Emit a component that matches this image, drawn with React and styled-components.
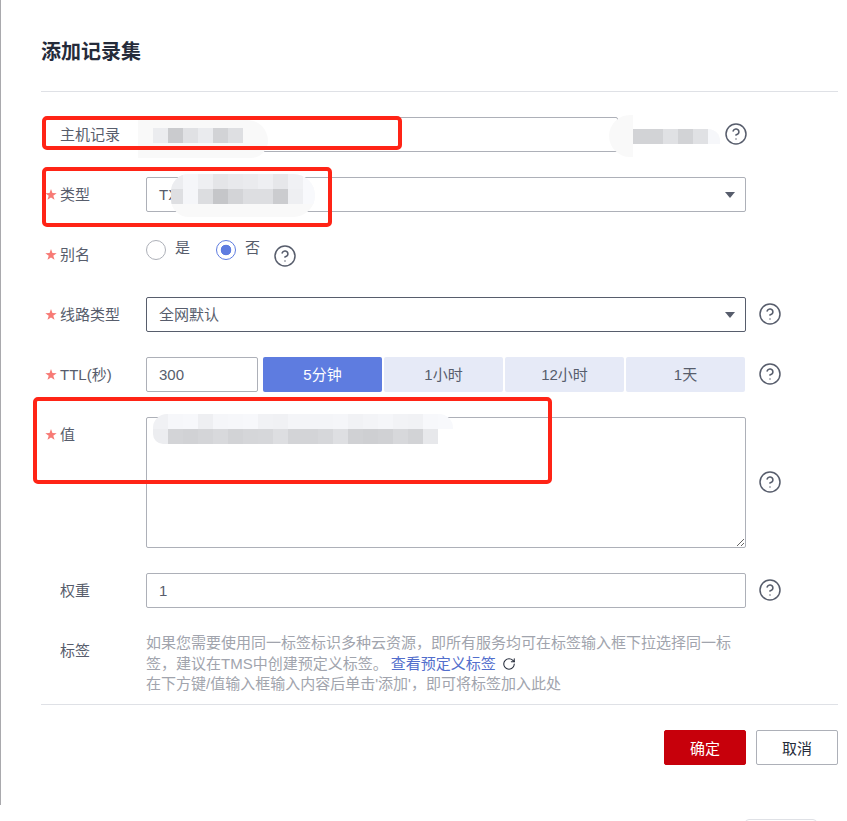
import React from 'react';
import styled, { createGlobalStyle } from 'styled-components';
import { CircleHelp, RotateCw } from 'lucide-react';

const GlobalStyle = createGlobalStyle`
  html, body {
    margin: 0;
    background: #fff;
    overflow: hidden;
  }
  body {
    font-family: 'Liberation Sans', 'Noto Sans CJK SC', sans-serif;
    font-size: 15px;
    color: #575d6c;
  }
`;

const Page = styled.div`
  position: relative;
  width: 847px;
  height: 821px;
  overflow: hidden;
`;

const Dialog = styled.div`
  box-sizing: border-box;
  width: 847px;
  height: 805px;
  padding: 0 9px 0 40px;
  border-left: 1px solid #a9a9ad;
`;

const Title = styled.h2`
  margin: 0;
  height: 92px;
  box-sizing: border-box;
  padding-top: 38px;
  font-size: 20px;
  line-height: 28px;
  font-weight: 700;
  color: #252b3a;
  border-bottom: 1px solid #dfe1e6;
`;

const Form = styled.div`
  display: flex;
  flex-direction: column;
  gap: 25px;
  padding-top: 25px;
`;

const Row = styled.div`
  display: flex;
  align-items: flex-start;
  min-height: 35px;
`;

const Label = styled.div`
  position: relative;
  flex: none;
  width: 105px;
  padding-left: 19px;
  box-sizing: border-box;
  line-height: 35px;
`;

const StarIcon = styled.svg`
  position: absolute;
  left: 4px;
  top: 12px;
  width: 12px;
  height: 12px;
  fill: #f77a75;
`;

const Box = styled.div`
  display: flex;
  align-items: center;
  justify-content: space-between;
  flex: none;
  box-sizing: border-box;
  width: ${(p) => p.$w || 600}px;
  height: 35px;
  padding: 0 12px;
  border: 1px solid ${(p) => (p.$active ? '#575d6c' : '#adb0b8')};
  border-radius: 2px;
  color: #575d6c;
  background: #fff;
`;

const SelectText = styled.span`
  margin-top: -3px;
`;

const Arrow = styled.i`
  width: 0;
  height: 0;
  margin-right: -2px;
  border-left: 5.5px solid transparent;
  border-right: 5.5px solid transparent;
  border-top: 6px solid #575d6c;
`;

const Help = styled(CircleHelp).attrs({ size: 24, strokeWidth: 1.5 })`
  flex: none;
  margin: ${(p) => p.$m || '5px 0 0 12px'};
  color: #575d6c;
`;

const Radios = styled.div`
  display: flex;
  flex: none;
  align-items: flex-start;
  padding-top: 3px;
  width: 130px;
`;

const RadioItem = styled.div`
  display: flex;
  flex: none;
  align-items: flex-start;
  width: 70px;
  line-height: 16px;
  color: #575d6c;
`;

const RadioDot = styled.span`
  flex: none;
  box-sizing: border-box;
  width: 20px;
  height: 20px;
  margin-right: 9px;
  border-radius: 50%;
  border: 1px solid ${(p) => (p.$on ? '#5e7ce0' : '#adb0b8')};
  background: ${(p) => (p.$on ? 'radial-gradient(circle, #5e7ce0 0 5px, #fff 5.6px)' : '#fff')};
`;

const Segments = styled.div`
  display: flex;
  flex: none;
  width: 482px;
  margin-left: 5px;
  gap: 2px;
`;

const Segment = styled.div`
  flex: 1;
  height: 35px;
  line-height: 35px;
  text-align: center;
  border-radius: 2px;
  background: ${(p) => (p.$on ? '#5e7ce0' : '#e6eaf7')};
  color: ${(p) => (p.$on ? '#fff' : '#575d6c')};
`;

const TextArea = styled.textarea`
  display: block;
  flex: none;
  box-sizing: border-box;
  width: 600px;
  height: 131px;
  margin: 0;
  border: 1px solid #adb0b8;
  border-radius: 2px;
  resize: both;
  outline: none;
  background: #fff;
`;

const Hint = styled.div`
  flex: none;
  width: 590px;
  line-height: 20.5px;
  color: #a1a4ad;
`;

const HintLink = styled.a`
  margin-left: 3px;
  color: #526ecc;
`;

const Refresh = styled(RotateCw).attrs({ size: 14, strokeWidth: 1.8 })`
  margin-left: 6px;
  vertical-align: -2px;
  color: #252b3a;
`;

const Footer = styled.div`
  display: flex;
  justify-content: flex-end;
  gap: 10px;
  margin-top: 9.5px;
  padding-top: 25px;
  border-top: 1px solid #dfe1e6;
`;

const Button = styled.button`
  width: 82px;
  height: 35px;
  padding: 0;
  font: inherit;
  border-radius: 2px;
  border: 1px solid ${(p) => (p.$primary ? '#c7000b' : '#adb0b8')};
  background: ${(p) => (p.$primary ? '#c7000b' : '#fff')};
  color: ${(p) => (p.$primary ? '#fff' : '#252b3a')};
`;

const PeekButton = styled.div`
  position: absolute;
  left: 745px;
  top: 819px;
  width: 72px;
  height: 20px;
  box-sizing: border-box;
  border: 1px solid #dfe1e6;
  border-radius: 4px;
`;

/* hand-drawn redaction over the screenshot */
const Patch = styled.div`
  position: absolute;
  left: ${(p) => p.$x}px;
  top: ${(p) => p.$y}px;
  width: ${(p) => p.$w}px;
  height: ${(p) => p.$h}px;
  box-sizing: border-box;
  padding: ${(p) => p.$pad || 0};
  overflow: hidden;
  background: ${(p) => p.$bg || '#f9f9f9'};
  border-radius: ${(p) => p.$r};
`;

const MosaicRow = styled.div`
  display: flex;
  height: 15px;
  margin-left: ${(p) => p.$shift || 0}px;
`;

const Cell = styled.i.attrs((p) => ({ style: { background: p.$c } }))`
  flex: none;
  width: 15px;
  height: 15px;
`;

const Marker = styled.div`
  position: absolute;
  left: ${(p) => p.$x}px;
  top: ${(p) => p.$y}px;
  width: ${(p) => p.$w}px;
  height: ${(p) => p.$h}px;
  box-sizing: border-box;
  border: 4px solid #ff2416;
  border-radius: 5px;
`;

const shade = (v) => `rgb(${v},${v + 1},${Math.min(v + 4, 255)})`;

const Mosaic = ({ rows, $shift, ...rest }) => (
  <Patch {...rest}>
    {rows.map((row, i) => (
      <MosaicRow key={i} $shift={$shift}>
        {row.map((v, j) => (
          <Cell key={j} $c={shade(v)} />
        ))}
      </MosaicRow>
    ))}
  </Patch>
);

const Required = () => (
  <StarIcon viewBox="0 0 11 11">
    <polygon points="5.5,0 6.8,3.7 10.73,3.8 7.6,6.2 8.73,9.95 5.5,7.8 2.27,9.95 3.4,6.2 0.27,3.8 4.2,3.7" />
  </StarIcon>
);

const App = () => {
  return (
    <Page>
      <GlobalStyle />
      <Dialog>
        <Title>添加记录集</Title>
        <Form>
          <Row>
            <Label>主机记录</Label>
            <Box $w={472} />
            <Help $m="5px 0 0 106px" />
          </Row>
          <Row>
            <Label>
              <Required />
              类型
            </Label>
            <Box>
              TXT
              <Arrow />
            </Box>
          </Row>
          <Row>
            <Label>
              <Required />
              别名
            </Label>
            <Radios>
              <RadioItem>
                <RadioDot />是
              </RadioItem>
              <RadioItem>
                <RadioDot $on />否
              </RadioItem>
            </Radios>
            <Help $m="7px 0 0 -3px" />
          </Row>
          <Row>
            <Label>
              <Required />
              线路类型
            </Label>
            <Box $active>
              <SelectText>全网默认</SelectText>
              <Arrow />
            </Box>
            <Help />
          </Row>
          <Row>
            <Label>
              <Required />
              TTL(秒)
            </Label>
            <Box $w={112}>300</Box>
            <Segments>
              <Segment $on>5分钟</Segment>
              <Segment>1小时</Segment>
              <Segment>12小时</Segment>
              <Segment>1天</Segment>
            </Segments>
            <Help $m="5px 0 0 13px" />
          </Row>
          <Row>
            <Label>
              <Required />
              值
            </Label>
            <TextArea readOnly />
            <Help $m="53px 0 0 12px" />
          </Row>
          <Row>
            <Label>权重</Label>
            <Box>1</Box>
            <Help />
          </Row>
          <Row>
            <Label>标签</Label>
            <Hint>
              如果您需要使用同一标签标识多种云资源，即所有服务均可在标签输入框下拉选择同一标签，建议在TMS中创建预定义标签。
              <HintLink>查看预定义标签</HintLink>
              <Refresh />
              <br />
              在下方键/值输入框输入内容后单击'添加'，即可将标签加入此处
            </Hint>
          </Row>
        </Form>
        <Footer>
          <Button $primary>确定</Button>
          <Button>取消</Button>
        </Footer>
      </Dialog>
      <PeekButton />

      <Mosaic
        $x={138}
        $y={120}
        $w={130}
        $h={38}
        $r="0 22px 18px 0"
        $pad="8px 0 0 15px"
        rows={[[235, 202, 224, 234, 210, 222]]}
      />
      <Mosaic
        $x={171}
        $y={174}
        $w={144}
        $h={43}
        $shift={-3}
        $r="18px 22px 22px 18px"
        rows={[
          [236, 245, 238, 228, 232, 234, 238, 230, 240, 248],
          [222, 245, 220, 197, 211, 221, 221, 203, 238, 248],
        ]}
      />
      <Patch $x={609} $y={115} $w={24} $h={42} $r="24px 0 0 24px" />
      <Mosaic
        $x={633}
        $y={129}
        $w={87}
        $h={15}
        $r="0 12px 0 0"
        rows={[[210, 210, 224, 210, 224, 246]]}
      />
      <Mosaic
        $x={153}
        $y={414}
        $w={300}
        $h={30}
        $bg="transparent"
        $r="14px 14px 0 10px"
        rows={[
          [240, 246, 247, 238, 245, 246, 247, 241, 240, 244, 244, 244, 245, 241, 243, 245, 242, 241, 247, 248],
          [236, 211, 209, 212, 216, 210, 213, 214, 221, 211, 211, 214, 222, 208, 206, 208, 215, 210, 231],
        ]}
      />

      <Marker $x={42} $y={116} $w={360} $h={34} />
      <Marker $x={42} $y={167} $w={290} $h={60} />
      <Marker $x={33} $y={397} $w={519} $h={87} />
    </Page>
  );
};

export default App;
